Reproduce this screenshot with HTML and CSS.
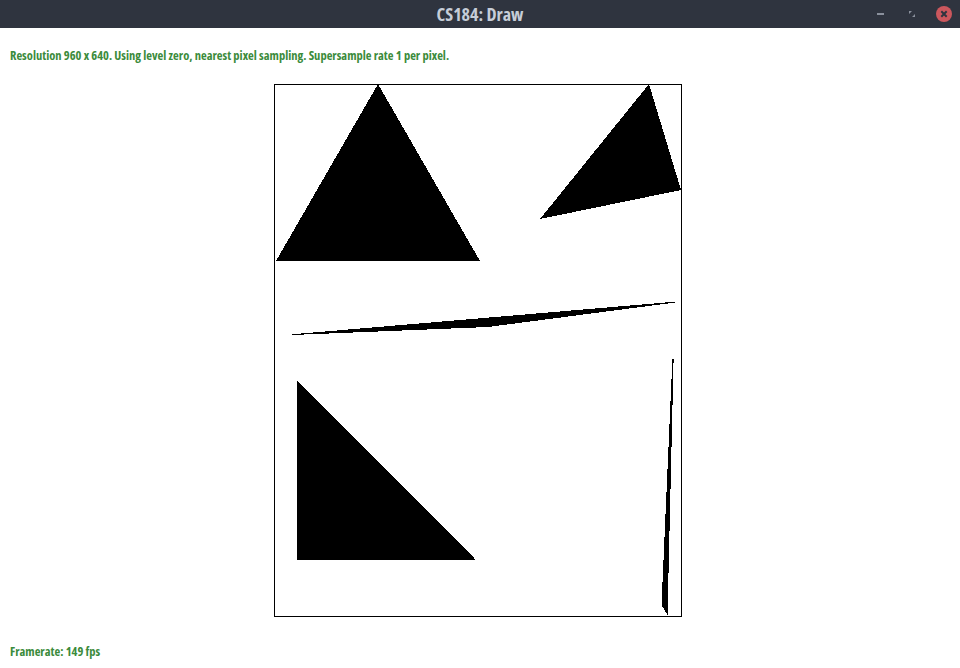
FILE: index.html
```html
<!DOCTYPE html>
<html>
<head>
<meta charset="utf-8">
<title>CS184: Draw</title>
<link rel="stylesheet" href="styles.css">
</head>
<body>
<div class="window">
  <header class="titlebar">
    <div class="title">CS184: Draw</div>
    <div class="controls">
      <span class="btn-min"></span>
      <svg class="btn-max" width="10" height="10" viewBox="0 0 10 10"><path d="M2 2h3L2 5z M8 8H5l3-3z" fill="#8a909c"/></svg>
      <span class="btn-close"><svg width="16" height="16" viewBox="0 0 16 16"><circle cx="8" cy="8" r="8" fill="#cc575d"/><path d="M5.3 5.3l5.4 5.4M10.7 5.3l-5.4 5.4" stroke="#2f343f" stroke-width="2"/></svg></span>
    </div>
  </header>
  <main class="content">
    <div class="status">Resolution 960 x 640. Using level zero, nearest pixel sampling. Supersample rate 1 per pixel.</div>
    <div class="canvas">
      <svg width="406" height="531" viewBox="275 85 406 531" shape-rendering="crispEdges">
        <polygon points="378,84 276,261 480,261" fill="#000"/>
        <polygon points="649,84 681,190 540,219" fill="#000"/>
        <polygon points="292,335 292,334.3 676,301.6 676,302.4 488,327" fill="#000"/>
        <polygon points="672.4,359 673.6,359 667.5,615 661.5,605" fill="#000"/>
        <polygon points="297,380 297,560 476,560" fill="#000"/>
      </svg>
    </div>
    <div class="footer">Framerate: 149 fps</div>
  </main>
</div>
</body>
</html>
```
FILE: styles.css
```css
html, body {
  margin: 0;
  padding: 0;
  background: #ffffff;
}
.window {
  width: 960px;
  height: 668px;
  display: flex;
  flex-direction: column;
}
.titlebar {
  flex-shrink: 0;
  height: 28px;
  background: #2f343f;
  position: relative;
  display: flex;
  align-items: center;
  justify-content: center;
}
.title {
  font-family: "Open Sans", "DejaVu Sans Condensed", sans-serif;
  font-stretch: 75%;
  font-weight: bold;
  font-size: 18px;
  color: #c6cdd8;
}
.controls {
  position: absolute;
  right: 8px;
  top: 6px;
  display: flex;
  align-items: center;
}
.btn-min {
  display: block;
  width: 7px;
  height: 2px;
  background: #8a909c;
  margin-right: 23px;
}
.btn-max {
  display: block;
  margin-right: 19px;
}
.btn-close {
  display: block;
  width: 16px;
  height: 16px;
}
.btn-close svg { display: block; }
.content {
  flex: 1;
  padding: 21px 10px 0;
  font-family: "Open Sans", "DejaVu Sans Condensed", sans-serif;
  font-stretch: 75%;
  font-weight: bold;
  font-size: 12.5px;
  color: #3b8b3b;
}
.status {
  height: 14px;
  line-height: 14px;
}
.canvas {
  margin-top: 21px;
  margin-left: 264px;
  width: 406px;
  height: 531px;
  border: 1px solid #000;
}
.canvas svg { display: block; }
.footer {
  margin-top: 28px;
  height: 14px;
  line-height: 14px;
}
```
